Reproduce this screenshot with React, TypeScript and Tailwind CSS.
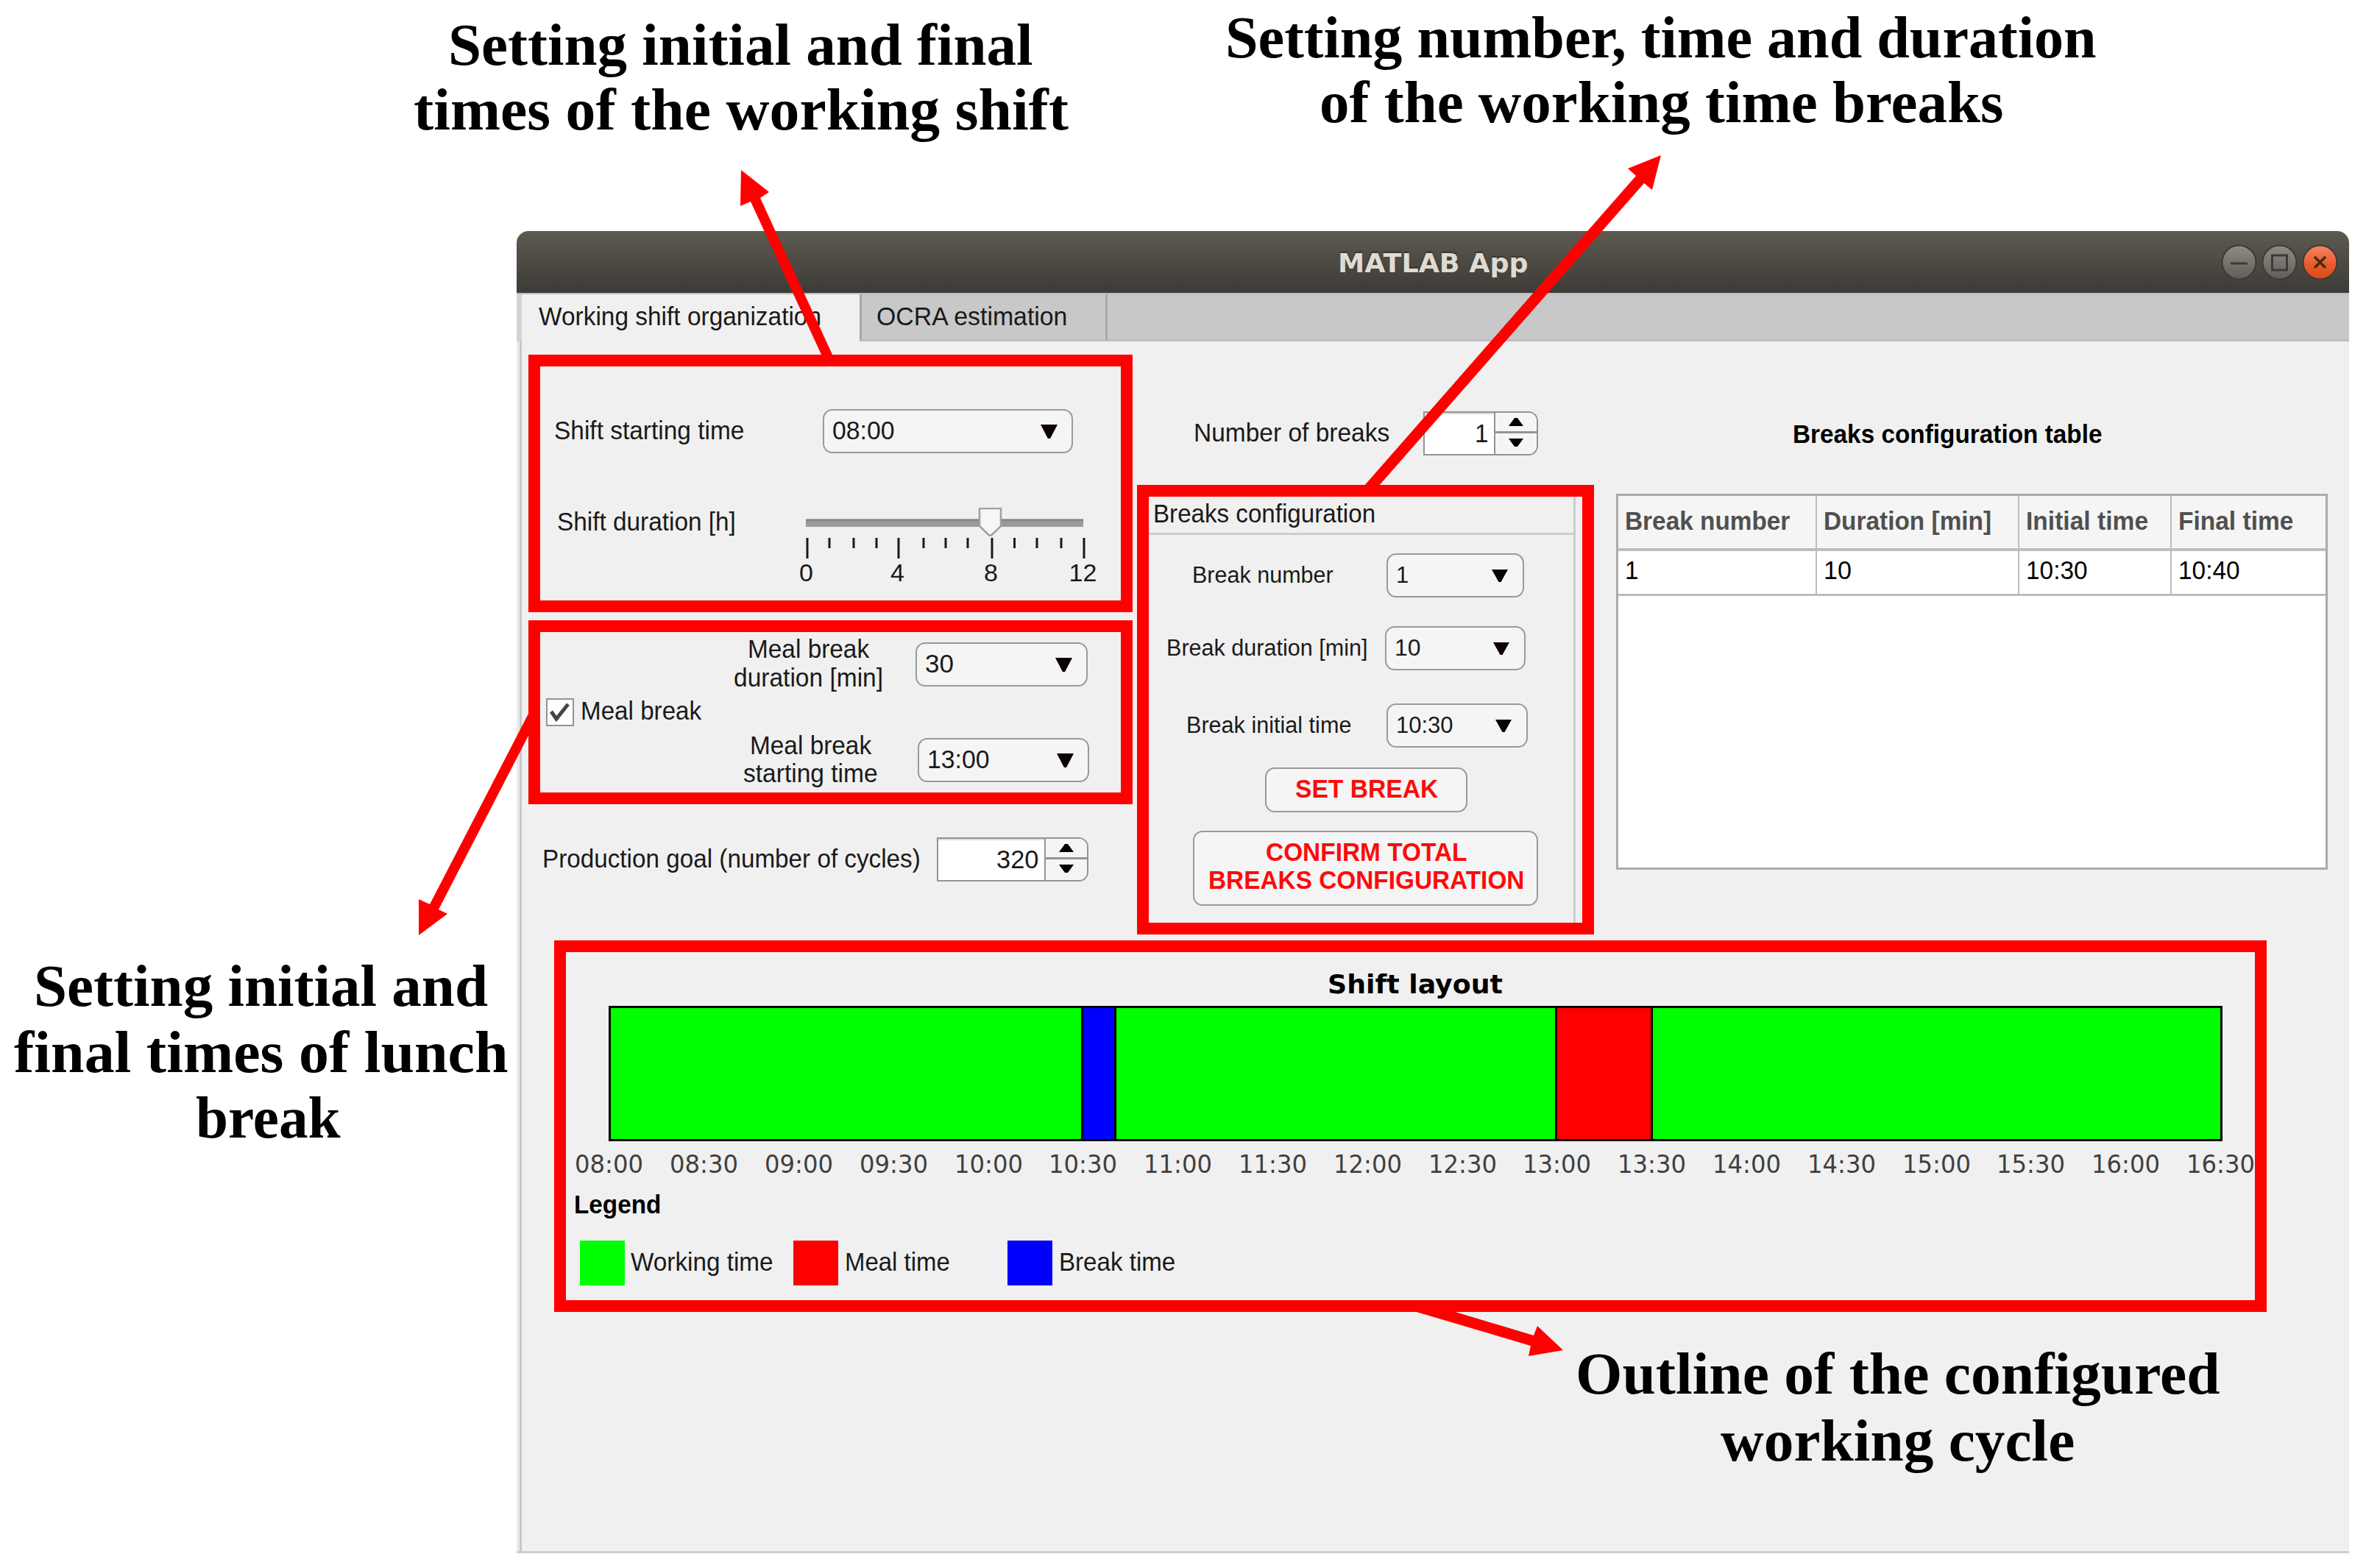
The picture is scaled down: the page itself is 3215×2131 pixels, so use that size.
import { useLayoutEffect, useRef, type ReactNode } from "react";

/* One line of text stretched horizontally so that it fills its box. */
function Line({ className, children }: { className: string; children: ReactNode }) {
  const ref = useRef<HTMLSpanElement>(null);
  useLayoutEffect(() => {
    const el = ref.current;
    if (!el || !el.parentElement) return;
    const k = (el.parentElement.clientWidth + 3) / el.offsetWidth;
    el.style.transform = `translate(-1px, -1.5px) scaleX(${k})`;
  }, []);
  return (
    <div className={`shrink-0 ${className}`}>
      <span ref={ref} className="block w-max origin-left whitespace-nowrap">
        {children}
      </span>
    </div>
  );
}

function Dropdown({ className, children, narrow }: { className: string; children: ReactNode; narrow?: boolean }) {
  return (
    <div
      className={`flex h-[60px] shrink-0 items-center justify-between rounded-[13px] border-[2.5px] border-[#9a9a9a] bg-[#f5f5f5] pl-[12px] ${
        narrow ? "pr-[20px]" : "pr-[19px]"
      } ${className}`}
    >
      {children}
      <svg viewBox="0 0 22 18" className={narrow ? "h-[17px] w-[22px]" : "h-[19px] w-[23px]"} preserveAspectRatio="none">
        <path d="M0 0H22L12.5 18H9.5Z" fill="#0c0203" />
      </svg>
    </div>
  );
}

function Spinner({ className, children }: { className: string; children: ReactNode }) {
  return (
    <div className={`flex h-[60px] shrink-0 rounded-r-[13px] border-[2.5px] border-[#949494] bg-white ${className}`}>
      <div className="flex grow items-center justify-end border-t-2 border-[#dcdcdc] pr-[10px]">{children}</div>
      <div className="flex w-[58px] flex-col rounded-r-[11px] border-l-[2.5px] border-[#949494] bg-[#f5f5f5]">
        <div className="flex grow basis-0 items-center justify-center border-b-[3px] border-[#949494]">
          <svg viewBox="0 0 20 11" className="h-[11px] w-[20px]">
            <path d="M0 11L8 0H12L20 11Z" fill="#000" />
          </svg>
        </div>
        <div className="flex grow basis-0 items-center justify-center pb-[3px]">
          <svg viewBox="0 0 20 11" className="h-[11px] w-[20px]">
            <path d="M0 0L8 11H12L20 0Z" fill="#000" />
          </svg>
        </div>
      </div>
    </div>
  );
}

function ShiftSlider() {
  const major = [
    [17, "0"],
    [141, "4"],
    [268, "8"],
    [393, "12"],
  ] as const;
  const minor = [47, 80, 111, 175, 205, 235, 298.5, 329, 362];
  return (
    <svg viewBox="0 0 420 110" className="ml-[82px] h-[110px] w-[420px] shrink-0">
      <rect x="15" y="15.5" width="377" height="10.5" fill="#9b9b9b" />
      <rect x="15" y="15.5" width="377" height="3" fill="#878787" />
      <path d="M251 1H280V25L267 37.5H264L251 25Z" fill="#f6f6f6" stroke="#a0a0a0" strokeWidth="2.5" />
      {major.map(([x, label]) => (
        <g key={label}>
          <rect x={x - 1.5} y="41" width="3" height="28" fill="#1a1a1a" />
          <text x={x - 1.5} y="99.5" textAnchor="middle" fontSize="34" fill="#1a1a1a">
            {label}
          </text>
        </g>
      ))}
      {minor.map((x) => (
        <rect key={x} x={x - 1.5} y="41" width="3" height="14" fill="#1a1a1a" />
      ))}
    </svg>
  );
}

function TitleBar() {
  return (
    <div className="flex h-[84px] items-center rounded-t-[16px] bg-linear-to-b from-[#5d5a51] to-[#3d3b36]">
      <Line className="ml-[1117px] w-[256px] pt-[5px] font-['DejaVu_Sans',sans-serif] text-[36px] leading-[42px] font-bold text-[#dfdbd2] [text-shadow:0_-2px_2px_#35342f]">
        MATLAB App
      </Line>
      <svg viewBox="0 0 180 60" className="ml-[937px] h-[60px] w-[180px] shrink-0">
        <defs>
          <linearGradient id="grey" x1="0" y1="0" x2="0" y2="1">
            <stop offset="0" stopColor="#8e8c85" />
            <stop offset="1" stopColor="#5f5d56" />
          </linearGradient>
          <linearGradient id="orange" x1="0" y1="0" x2="0" y2="1">
            <stop offset="0" stopColor="#f58560" />
            <stop offset="0.6" stopColor="#e8582b" />
            <stop offset="1" stopColor="#de4a19" />
          </linearGradient>
        </defs>
        <circle cx="30.5" cy="30.5" r="23" fill="url(#grey)" stroke="#3c3b37" strokeWidth="2" />
        <circle cx="85.5" cy="30.5" r="23" fill="url(#grey)" stroke="#3c3b37" strokeWidth="2" />
        <circle cx="140.5" cy="30.5" r="23" fill="url(#orange)" stroke="#3c3b37" strokeWidth="2" />
        <path d="M19 32H42" stroke="#3c3b37" strokeWidth="3" />
        <rect x="75.5" y="21" width="20" height="20" fill="none" stroke="#3c3b37" strokeWidth="3" />
        <path d="M133 23L148 38M148 23L133 38" stroke="#44300f" strokeWidth="3.5" />
      </svg>
    </div>
  );
}

function Tabs() {
  return (
    <div className="flex h-[66px] border-t-2 border-[#bdbdbd] bg-[#c8c8c8]">
      <div className="flex w-[466px] items-center border-l-[7px] border-[#d2d2d2] bg-[#f0f0f0] pb-[1px] pl-[24px]">
        <Line className="w-[381px]">Working shift organization</Line>
      </div>
      <div className="flex w-[337px] items-center border-x-[3px] border-b-[3px] border-[#a9a9a9] border-b-[#bebebe] pt-[2px] pl-[21px]">
        <Line className="w-[256px]">OCRA estimation</Line>
      </div>
      <div className="grow border-b-[3px] border-[#bebebe]" />
    </div>
  );
}

function ShiftColumn() {
  return (
    <div className="w-[836px] shrink-0">
      <div className="mt-[18px] ml-[9px] h-[350px] w-[821px] border-[16px] border-[#ff0000]">
        <div className="mt-[58px] flex items-center">
          <Line className="ml-[20px] w-[255px]">Shift starting time</Line>
          <Dropdown className="ml-[109px] w-[340px]">
            <Line className="w-[82px]">08:00</Line>
          </Dropdown>
        </div>
        <div className="mt-[74px] flex items-start">
          <Line className="ml-[24px] w-[240px] pt-[1px]">Shift duration [h]</Line>
          <ShiftSlider />
        </div>
      </div>

      <div className="mt-[11px] ml-[9px] flex h-[250px] w-[821px] items-center border-[16px] border-[#ff0000]">
        <div className="ml-[8px] flex size-[38px] items-center justify-center border-[2.5px] border-[#959595] bg-white">
          <svg viewBox="0 0 30 30" className="size-[30px]">
            <path d="M3 14L10 24L26 4" fill="none" stroke="#454545" strokeWidth="5" />
          </svg>
        </div>
        <Line className="ml-[10px] w-[161px] pb-[2px]">Meal break</Line>
        <div className="ml-[47px] flex flex-col gap-[70px]">
          <div className="flex h-[60px] items-center">
            <div className="flex w-[200px] flex-col items-center pb-[1px]">
              <Line className="w-[162px]">Meal break</Line>
              <Line className="w-[200px]">duration [min]</Line>
            </div>
            <Dropdown className="ml-[46px] w-[234px]">
              <Line className="w-[36px]">30</Line>
            </Dropdown>
          </div>
          <div className="flex h-[60px] items-center">
            <div className="ml-[3px] flex w-[200px] flex-col items-center">
              <Line className="w-[162px]">Meal break</Line>
              <Line className="w-[180px]">starting time</Line>
            </div>
            <Dropdown className="ml-[46px] w-[233px]">
              <Line className="w-[82px]">13:00</Line>
            </Dropdown>
          </div>
        </div>
      </div>

      <div className="mt-[45px] flex items-center">
        <Line className="ml-[29px] w-[511px]">Production goal (number of cycles)</Line>
        <Spinner className="ml-[24px] w-[206px]">
          <Line className="w-[54px]">320</Line>
        </Spinner>
      </div>
    </div>
  );
}

function BreaksColumn() {
  return (
    <div className="w-[621px] shrink-0">
      <div className="mt-[95px] flex items-center">
        <Line className="ml-[78px] w-[263px]">Number of breaks</Line>
        <Spinner className="ml-[48px] w-[156px]">
          <Line className="w-[15px]">1</Line>
        </Spinner>
      </div>

      <div className="mt-[40px] h-[611px] w-[621px] border-[16px] border-[#ff0000]">
        <div className="h-full w-[580px] border-r-[3px] border-[#cdcdcd]">
          <div className="flex h-[52px] items-center border-b-[3px] border-[#cdcdcd]">
            <Line className="ml-[7px] w-[299px]">Breaks configuration</Line>
          </div>
          <div className="text-[31px]">
            <div className="mt-[25px] flex items-center">
              <Line className="ml-[60px] w-[189px] pt-[2px]">Break number</Line>
              <Dropdown narrow className="ml-[74px] w-[187px]">
                <Line className="w-[14px] pt-[2px]">1</Line>
              </Dropdown>
            </div>
            <div className="mt-[39px] flex items-center">
              <Line className="ml-[25px] w-[270px] pt-[2px]">Break duration [min]</Line>
              <Dropdown narrow className="ml-[26px] w-[191px]">
                <Line className="w-[32px] pt-[2px]">10</Line>
              </Dropdown>
            </div>
            <div className="mt-[45px] flex items-center">
              <Line className="ml-[52px] w-[221px] pt-[2px]">Break initial time</Line>
              <Dropdown narrow className="ml-[50px] w-[192px]">
                <Line className="w-[75px] pt-[2px]">10:30</Line>
              </Dropdown>
            </div>
          </div>
          <div className="mt-[27px] ml-[158px] flex h-[61px] w-[275px] items-center justify-center rounded-[13px] border-[2.5px] border-[#9a9a9a] bg-[#f5f5f5] font-bold text-[#ff0a0a]">
            <Line className="w-[191px]">SET BREAK</Line>
          </div>
          <div className="mt-[25px] ml-[60px] flex h-[102px] w-[469px] flex-col items-center justify-center rounded-[13px] border-[2.5px] border-[#9a9a9a] bg-[#f5f5f5] pb-[4px] font-bold text-[#ff0a0a]">
            <Line className="w-[270px]">CONFIRM TOTAL</Line>
            <Line className="w-[426px]">BREAKS CONFIGURATION</Line>
          </div>
        </div>
      </div>
    </div>
  );
}

function BreaksTable() {
  const cell = "flex items-center border-r-[2.5px] border-[#bdbdbd] pl-[10px]";
  return (
    <div className="grow">
      <Line className="mt-[108px] ml-[271px] w-[417px] font-bold text-black">Breaks configuration table</Line>
      <div className="mt-[60px] ml-[30px] flex h-[511px] w-[967px] flex-col border-[3px] border-[#ababab] bg-white">
        <div className="grid h-[75px] grid-cols-[270px_275px_207px_1fr] border-b-[4px] border-[#bdbdbd] bg-[#f5f5f5] font-bold text-[#505050]">
          <div className={cell}>
            <Line className="w-[221px]">Break number</Line>
          </div>
          <div className={cell}>
            <Line className="w-[225px]">Duration [min]</Line>
          </div>
          <div className={cell}>
            <Line className="w-[163px]">Initial time</Line>
          </div>
          <div className="flex items-center pl-[10px]">
            <Line className="w-[153px]">Final time</Line>
          </div>
        </div>
        <div className="grid h-[61px] grid-cols-[270px_275px_207px_1fr] border-b-[3px] border-[#bdbdbd] text-black">
          <div className={cell}>
            <Line className="w-[15px] pb-[2px]">1</Line>
          </div>
          <div className={cell}>
            <Line className="w-[35px] pb-[2px]">10</Line>
          </div>
          <div className={cell}>
            <Line className="w-[81px] pb-[2px]">10:30</Line>
          </div>
          <div className="flex items-center pl-[10px]">
            <Line className="w-[81px] pb-[2px]">10:40</Line>
          </div>
        </div>
      </div>
    </div>
  );
}

const HOURS = [
  "08:00", "08:30", "09:00", "09:30", "10:00", "10:30", "11:00", "11:30", "12:00",
  "12:30", "13:00", "13:30", "14:00", "14:30", "15:00", "15:30", "16:00", "16:30",
];

function ShiftLayout() {
  return (
    <div className="ml-[44px] h-[505px] w-[2327px] border-[16px] border-[#ff0000]">
      <div className="h-[73px] pt-[24px]">
        <Line className="ml-[1036px] w-[235px] font-['DejaVu_Sans',sans-serif] text-[36px] leading-[42px] font-bold text-black">
          Shift layout
        </Line>
      </div>
      <div className="ml-[58px] flex h-[184px] w-[2193px] border-[3px] border-black">
        <div className="w-[642px] border-r-[3px] border-black bg-[#00ff00]" />
        <div className="w-[45px] border-r-[3px] border-black bg-[#0000ff]" />
        <div className="w-[599px] border-r-[3px] border-black bg-[#00ff00]" />
        <div className="w-[130px] border-r-[3px] border-black bg-[#ff0000]" />
        <div className="grow bg-[#00ff00]" />
      </div>
      <div className="mt-[12px] -ml-[6px] flex h-[40px] w-[2318px] items-center font-['DejaVu_Sans',sans-serif] text-[34px] text-[#404040]">
        {HOURS.map((h) => (
          <div key={h} className="flex w-[128.8px] shrink-0 justify-center">
            <Line className="w-[90px]">{h}</Line>
          </div>
        ))}
      </div>
      <Line className="mt-[16px] ml-[12px] w-[115px] font-bold text-black">Legend</Line>
      <div className="mt-[28px] ml-[19px] flex h-[61px] items-center">
        <div className="h-[61px] w-[61px] bg-[#00ff00]" />
        <Line className="ml-[9px] w-[191px]">Working time</Line>
        <div className="ml-[29px] h-[61px] w-[61px] bg-[#ff0000]" />
        <Line className="ml-[10px] w-[140px]">Meal time</Line>
        <div className="ml-[80px] h-[61px] w-[61px] bg-[#0000ff]" />
        <Line className="ml-[10px] w-[155px]">Break time</Line>
      </div>
    </div>
  );
}

/* Captions and arrows that float over the window. */
function Annotations() {
  return (
    <div className="font-['Liberation_Serif',serif] text-[80px] font-bold text-black">
      <div className="absolute top-[18px] left-[562px] flex w-[888px] flex-col items-center leading-[88px]">
        <Line className="w-[792px]">Setting initial and final</Line>
        <Line className="w-[887px]">times of the working shift</Line>
      </div>
      <div className="absolute top-[8px] left-[1665px] flex w-[1183px] flex-col items-center leading-[88px]">
        <Line className="w-[1181px]">Setting number, time and duration</Line>
        <Line className="w-[926px]">of the working time breaks</Line>
      </div>
      <div className="absolute top-[1297px] left-[19px] flex w-[670px] flex-col items-center leading-[89.5px]">
        <Line className="w-[614px]">Setting initial and</Line>
        <Line className="w-[669px]">final times of lunch</Line>
        <div className="pl-[20px]">
          <Line className="w-[194px]">break</Line>
        </div>
      </div>
      <div className="absolute top-[1823px] left-[2141px] flex w-[874px] flex-col items-center leading-[91px]">
        <Line className="w-[873px]">Outline of the configured</Line>
        <Line className="w-[478px]">working cycle</Line>
      </div>
      <svg viewBox="0 0 3215 2131" className="absolute top-0 left-0 h-[2131px] w-[3215px]" fill="#ff0000">
        <path d="M1007 231L1045 261L1033 269L1132 484H1117L1020 274L1006 280Z" />
        <path d="M2257 211L2212 229L2223 239L1853 661H1873L2234 249L2245 258Z" />
        <path d="M569 1271V1222L584 1229L720 966V996L596 1236L608 1242Z" />
        <path d="M2124 1835L2089 1802L2084 1815L1971 1781H1918L2080 1829L2077 1843Z" />
      </svg>
    </div>
  );
}

export default function App() {
  return (
    <div className="relative h-[2131px] w-[3215px] overflow-hidden bg-white pt-[314px] font-['Liberation_Sans',sans-serif] text-[35px] leading-[38.5px] text-[#1a1a1a]">
      <div className="ml-[702px] flex h-[1797px] w-[2490px] flex-col">
        <TitleBar />
        <Tabs />
        <div className="flex grow border-b-[3px] border-[#cfcfcf] bg-[#f0f0f0]">
          <div className="w-[7px] shrink-0 border-r-[3px] border-[#c8c8c8] bg-[#eaeaea]" />
          <div className="flex grow flex-col">
            <div className="flex h-[814px]">
              <ShiftColumn />
              <BreaksColumn />
              <BreaksTable />
            </div>
            <ShiftLayout />
          </div>
        </div>
      </div>
      <Annotations />
    </div>
  );
}
